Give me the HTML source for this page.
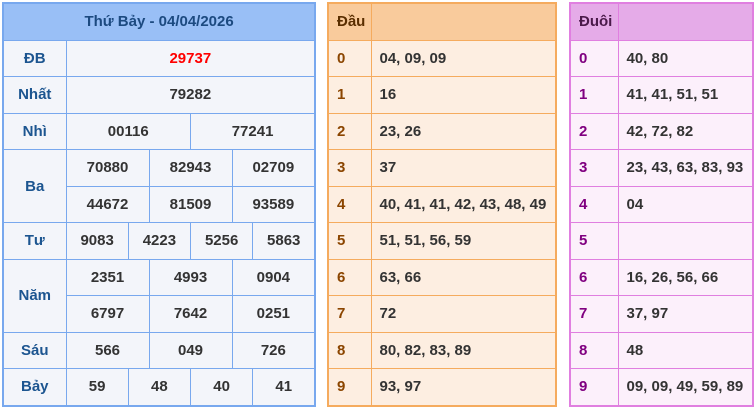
<!DOCTYPE html>
<html><head><meta charset="utf-8"><style>
body{margin:0;width:756px;height:409px;background:#fff;font-family:"Liberation Sans",Arial,sans-serif;font-weight:bold;font-size:15px;color:#333;position:relative;overflow:hidden}
table{border-collapse:collapse;table-layout:fixed;position:absolute;top:2px}
td{padding:0;overflow:hidden;white-space:nowrap}
#L{left:2px;width:312px;border:2px solid #78a8ee}
#L td{border:1px solid #78a8ee;background:#f3f5fa;text-align:center;height:35.5px}
#L .h td{background:#99bff6;color:#1c4a80}
#L .lb{color:#1c5590}
.red{color:#f00}
#M{left:327px;width:230px;border:2px solid #f5ab5e}
#M td{border:1px solid #f5ab5e;background:#fdeee1;height:35.5px;padding-left:8px}
#M .h td{background:#f9cb9c;color:#5a2e00}
#M .lb{color:#8b4500}
#R{left:569px;width:185px;border:2px solid #e07fe0}
#R td{border:1px solid #e07fe0;background:#fcf0fb;height:35.5px;padding-left:8px}
#R .h td{background:#e5abe8;color:#4a1a4a}
#R .lb{color:#800080}
</style></head><body>
<table id="L">
<colgroup><col style="width:63px"><col span="12" style="width:20.75px"></colgroup>
<tr class="h"><td colspan="13">Thứ Bảy - 04/04/2026</td></tr>
<tr><td class="lb">ĐB</td><td colspan="12" class="red">29737</td></tr>
<tr><td class="lb">Nhất</td><td colspan="12">79282</td></tr>
<tr><td class="lb">Nhì</td><td colspan="6">00116</td><td colspan="6">77241</td></tr>
<tr><td class="lb" rowspan="2">Ba</td><td colspan="4">70880</td><td colspan="4">82943</td><td colspan="4">02709</td></tr>
<tr><td colspan="4">44672</td><td colspan="4">81509</td><td colspan="4">93589</td></tr>
<tr><td class="lb">Tư</td><td colspan="3">9083</td><td colspan="3">4223</td><td colspan="3">5256</td><td colspan="3">5863</td></tr>
<tr><td class="lb" rowspan="2">Năm</td><td colspan="4">2351</td><td colspan="4">4993</td><td colspan="4">0904</td></tr>
<tr><td colspan="4">6797</td><td colspan="4">7642</td><td colspan="4">0251</td></tr>
<tr><td class="lb">Sáu</td><td colspan="4">566</td><td colspan="4">049</td><td colspan="4">726</td></tr>
<tr><td class="lb">Bảy</td><td colspan="3">59</td><td colspan="3">48</td><td colspan="3">40</td><td colspan="3">41</td></tr>
</table>
<table id="M">
<colgroup><col style="width:43px"><col></colgroup>
<tr class="h"><td>Đầu</td><td></td></tr>
<tr><td class="lb">0</td><td>04, 09, 09</td></tr>
<tr><td class="lb">1</td><td>16</td></tr>
<tr><td class="lb">2</td><td>23, 26</td></tr>
<tr><td class="lb">3</td><td>37</td></tr>
<tr><td class="lb">4</td><td>40, 41, 41, 42, 43, 48, 49</td></tr>
<tr><td class="lb">5</td><td>51, 51, 56, 59</td></tr>
<tr><td class="lb">6</td><td>63, 66</td></tr>
<tr><td class="lb">7</td><td>72</td></tr>
<tr><td class="lb">8</td><td>80, 82, 83, 89</td></tr>
<tr><td class="lb">9</td><td>93, 97</td></tr>
</table>
<table id="R">
<colgroup><col style="width:48px"><col></colgroup>
<tr class="h"><td>Đuôi</td><td></td></tr>
<tr><td class="lb">0</td><td>40, 80</td></tr>
<tr><td class="lb">1</td><td>41, 41, 51, 51</td></tr>
<tr><td class="lb">2</td><td>42, 72, 82</td></tr>
<tr><td class="lb">3</td><td>23, 43, 63, 83, 93</td></tr>
<tr><td class="lb">4</td><td>04</td></tr>
<tr><td class="lb">5</td><td></td></tr>
<tr><td class="lb">6</td><td>16, 26, 56, 66</td></tr>
<tr><td class="lb">7</td><td>37, 97</td></tr>
<tr><td class="lb">8</td><td>48</td></tr>
<tr><td class="lb">9</td><td>09, 09, 49, 59, 89</td></tr>
</table>
</body></html>
